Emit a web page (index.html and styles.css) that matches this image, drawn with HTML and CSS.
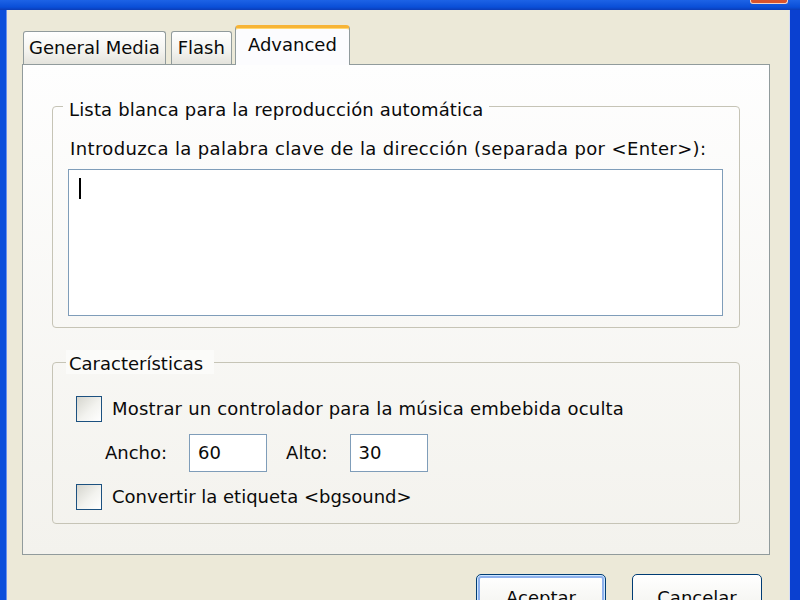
FILE: index.html
```html
<!DOCTYPE html>
<html lang="es">
<head>
<meta charset="utf-8">
<title>Advanced</title>
<link rel="stylesheet" href="styles.css">
</head>
<body>
<div class="window">
  <div class="titlebar"><span class="close"></span></div>
  <div class="frame">
    <div class="tabs">
      <div class="tab">General Media</div>
      <div class="tab tab-gap">Flash</div>
      <div class="tab tab-active">Advanced</div>
    </div>
    <div class="panel">
      <fieldset class="group group-list">
        <legend class="legend-plain">Lista blanca para la reproducción automática</legend>
        <div class="hint">Introduzca la palabra clave de la dirección (separada por &lt;Enter&gt;):</div>
        <div class="textbox"><span class="caret"></span></div>
      </fieldset>
      <fieldset class="group group-features">
        <legend class="legend-boxed">Características</legend>
        <label class="check-row"><span class="checkbox"></span><span class="wide">Mostrar un controlador para la música embebida oculta</span></label>
        <div class="size-row">
          <span>Ancho:</span>
          <span class="field">60</span>
          <span class="alto">Alto:</span>
          <span class="field">30</span>
        </div>
        <label class="check-row"><span class="checkbox"></span><span>Convertir la etiqueta &lt;bgsound&gt;</span></label>
      </fieldset>
    </div>
    <div class="buttons">
      <div class="btn btn-default">Aceptar</div>
      <div class="btn">Cancelar</div>
    </div>
  </div>
</div>
</body>
</html>
```
FILE: styles.css
```css
html, body {
  margin: 0;
  padding: 0;
  overflow: hidden;
  height: 100%;
}
body {
  font-family: "DejaVu Sans", "Liberation Sans", sans-serif;
  font-size: 18px;
  line-height: 24px;
  color: #0A0A0A;
  background: #ECE9D8;
}
.window {
  display: flex;
  flex-direction: column;
  height: 100%;
}
.titlebar {
  height: 10px;
  flex: none;
  background: linear-gradient(#1D63E6, #0A4FD8 70%, #0B3DB8);
  display: flex;
  justify-content: flex-end;
  padding-right: 12px;
}
.close {
  width: 36px;
  height: 3px;
  background: #D9532C;
  border: 1px solid #F3D3C6;
  border-top: none;
  border-radius: 0 0 3px 3px;
}
.frame {
  flex: 1;
  border-left: 6px solid #0B4FDB;
  border-right: 10px solid #0A40D0;
  background: #ECE9D8;
  padding: 15px 20px 0 16px;
  box-shadow: inset 1px 0 0 #6A93EE, inset -1px 0 0 #D6DDF5;
}
.tabs {
  display: flex;
  align-items: flex-end;
  margin-left: 1px;
  position: relative;
  z-index: 1;
}
.tab {
  height: 32px;
  padding: 0 5px;
  border: 1px solid #919B9C;
  border-bottom: none;
  border-radius: 3px 3px 0 0;
  background: linear-gradient(#FFFFFF, #F3F3EF 60%, #E4E3DC);
  display: flex;
  align-items: center;
}
.tab-gap {
  margin-left: 5px;
  padding: 0 6px;
}
.tab-active {
  margin-left: 3px;
  padding: 0 12px 3px;
  box-sizing: content-box;
  height: 34px;
  margin-bottom: -1px;
  background: #FCFCFE;
  border-top: 3px solid #F7B436;
  border-radius: 4px 4px 0 0;
  box-shadow: inset 0 1px 0 #FFD773;
}
.panel {
  border: 1px solid #919B9C;
  background: linear-gradient(#FEFEFE, #F3F2ED);
  padding: 25px 29px 30px;
}
.group {
  margin: 0;
  border: 1px solid #C6C4B6;
  border-radius: 4px;
  padding: 15px 16px 11px 15px;
  min-inline-size: 0;
}
.legend-plain {
  margin-left: -5px;
  padding: 8px 6px 0;
  line-height: 24px;
  letter-spacing: 0.16px;
}
.hint {
  height: 24px;
  white-space: nowrap;
  padding-left: 2px;
  letter-spacing: 0.38px;
}
.textbox {
  margin-top: 8px;
  border: 1px solid #7F9DB9;
  background: #FFFFFF;
  padding: 8px 10px;
  box-sizing: border-box;
  height: 147px;
}
.caret {
  display: block;
  width: 2px;
  height: 21px;
  background: #000;
}
.group-features {
  margin-top: 22px;
  padding: 22px 16px 13px 15px;
  display: flex;
  flex-direction: column;
  gap: 12px;
}
.legend-boxed {
  margin-left: -2px;
  padding: 3px 11px 0 3px;
  line-height: 21px;
  background: #FBFBF9;
}
.check-row {
  display: flex;
  align-items: center;
  gap: 10px;
  padding-left: 8px;
  height: 26px;
}
.wide {
  letter-spacing: 0.2px;
}
.checkbox {
  width: 24px;
  height: 24px;
  flex: none;
  border: 1px solid #1C5180;
  background: linear-gradient(135deg, #D5D5CE, #F3F3EF 55%, #FFFFFF);
}
.size-row {
  display: flex;
  align-items: center;
  padding-left: 37px;
  height: 38px;
}
.field {
  width: 78px;
  height: 38px;
  box-sizing: border-box;
  border: 1px solid #7F9DB9;
  background: #FFFFFF;
  padding: 0 8px;
  margin-left: 22px;
  display: flex;
  align-items: center;
}
.alto {
  margin-left: 19px;
}
.buttons {
  display: flex;
  justify-content: flex-end;
  gap: 26px;
  margin-top: 19px;
  padding-right: 8px;
}
.btn {
  width: 130px;
  height: 48px;
  box-sizing: border-box;
  border: 1px solid #003C74;
  border-radius: 5px;
  background: linear-gradient(#FFFFFF, #F4F4F0 70%, #E3E1D8);
  display: flex;
  justify-content: center;
  padding-top: 11px;
}
.btn-default {
  box-shadow: inset 0 0 0 1px #CEE7FF, inset 0 0 0 3px #8EB1EC;
}
```
